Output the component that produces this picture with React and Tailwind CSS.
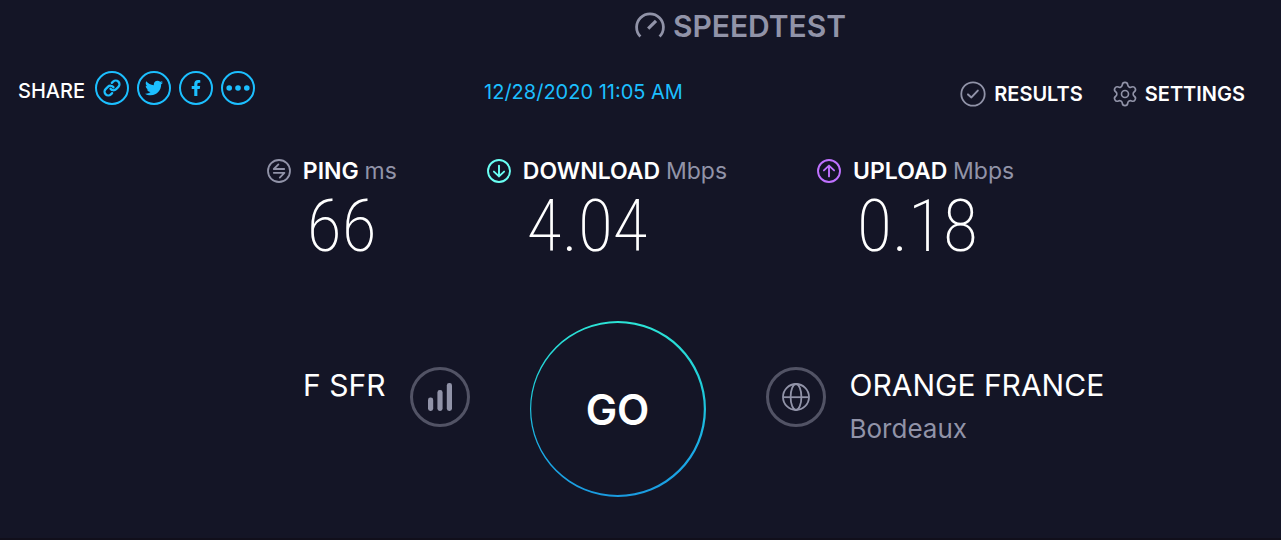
import { Settings } from "lucide-react"
import { FaFacebookF, FaTwitter } from "react-icons/fa"
import { FiLink } from "react-icons/fi"

function GaugeIcon() {
  return (
    <svg viewBox="0 0 30 30" className="size-[30px]" fill="none" stroke="currentColor" strokeWidth="2.8" aria-hidden="true">
      <path d="M5.4 25.6A13.4 13.4 0 1 1 24.6 25.6" />
      <path d="M13.2 17.6L21 9.8" strokeWidth="3.2" />
    </svg>
  )
}

function DotsIcon() {
  return (
    <svg viewBox="0 0 24 6" className="w-6" fill="currentColor" aria-hidden="true">
      <circle cx="3.2" cy="3" r="2.8" />
      <circle cx="12" cy="3" r="2.8" />
      <circle cx="20.8" cy="3" r="2.8" />
    </svg>
  )
}

function CheckIcon() {
  return (
    <svg viewBox="0 0 26 26" className="size-[26px] text-[#9193a8]" fill="none" stroke="currentColor" strokeWidth="1.8" aria-hidden="true">
      <circle cx="13" cy="13" r="11.7" />
      <path d="M8 13.4L11.4 16.4L17.8 9.6" strokeWidth="2" strokeLinecap="round" strokeLinejoin="round" />
    </svg>
  )
}

function PingIcon() {
  return (
    <svg viewBox="0 0 24 24" className="size-6 text-[#9193a8]" fill="none" stroke="currentColor" strokeWidth="1.8" strokeLinecap="round" strokeLinejoin="round" aria-hidden="true">
      <circle cx="12" cy="12" r="11" />
      <path d="M11.4 5.4L6.8 10H17.2" />
      <path d="M6.8 13.8H17.4L12.8 18.6" />
    </svg>
  )
}

function DownloadIcon() {
  return (
    <svg viewBox="0 0 24 24" className="size-6 text-[#6afff3]" fill="none" stroke="currentColor" strokeWidth="1.9" strokeLinecap="round" strokeLinejoin="round" aria-hidden="true">
      <circle cx="12" cy="12" r="11" />
      <path d="M12 6.6V17.4M6.9 12.6L12 17.4L17.1 12.6" />
    </svg>
  )
}

function UploadIcon() {
  return (
    <svg viewBox="0 0 24 24" className="size-6 text-[#bf71ff]" fill="none" stroke="currentColor" strokeWidth="1.9" strokeLinecap="round" strokeLinejoin="round" aria-hidden="true">
      <circle cx="12" cy="12" r="11" />
      <path d="M12 17.4V6.6M6.9 11.4L12 6.6L17.1 11.4" />
    </svg>
  )
}

function BarsIcon() {
  return (
    <svg viewBox="0 0 24 28" className="h-7 w-6" fill="#9193a8" aria-hidden="true">
      <rect x="0" y="14.5" width="5.2" height="13.5" rx="2.4" />
      <rect x="9.4" y="7" width="5.2" height="21" rx="2.4" />
      <rect x="18.8" y="0" width="5.2" height="28" rx="2.4" />
    </svg>
  )
}

function GlobeIcon() {
  return (
    <svg viewBox="0 0 28 28" className="size-7" fill="none" stroke="#9193a8" strokeWidth="1.8" aria-hidden="true">
      <circle cx="14" cy="14" r="13" />
      <ellipse cx="14" cy="14" rx="5.4" ry="13" />
      <path d="M1 14.2H27" />
    </svg>
  )
}

function GoRing() {
  return (
    <svg viewBox="0 0 176 176" className="absolute inset-0 size-full" aria-hidden="true">
      <defs>
        <linearGradient id="ring" x1="0" y1="0" x2="0" y2="1">
          <stop offset="0" stopColor="#2ce4d6" />
          <stop offset="0.4" stopColor="#1fcbd8" />
          <stop offset="0.75" stopColor="#1ba9e6" />
          <stop offset="1" stopColor="#1a9be0" />
        </linearGradient>
      </defs>
      <path
        fill="url(#ring)"
        fillRule="evenodd"
        d="M88 0A88 88 0 1 1 88 176A88 88 0 1 1 88 0ZM87.5 2A86.3 86 0 1 0 87.5 174A86.3 86 0 1 0 87.5 2Z"
      />
    </svg>
  )
}

const shareLinks = [
  { label: "Copy link", icon: <FiLink className="size-[18px]" strokeWidth={3} /> },
  { label: "Twitter", icon: <FaTwitter className="size-[18px]" /> },
  { label: "Facebook", icon: <FaFacebookF className="size-4" /> },
  { label: "More", icon: <DotsIcon /> },
]

const results = [
  { name: "PING", unit: "ms", value: "66", icon: <PingIcon /> },
  { name: "DOWNLOAD", unit: "Mbps", value: "4.04", icon: <DownloadIcon /> },
  { name: "UPLOAD", unit: "Mbps", value: "0.18", icon: <UploadIcon /> },
]

export default function App() {
  return (
    <div className="min-h-screen border-b-2 border-[#110f1b] bg-[#141526] font-['Inter',sans-serif] text-white">
      <header className="flex justify-center pt-2 pl-[200px] text-[#9193a8]">
        <a href="#" className="flex h-9 items-center gap-2 text-[30px] font-semibold">
          <GaugeIcon />
          <span>SPEEDTEST</span>
        </a>
      </header>

      <div className="mt-[27px] grid grid-cols-[1fr_auto_1fr] items-start pr-9 pl-[18px]">
        <div className="flex items-center gap-[10px]">
          <span className="pt-1.5 text-[20px] leading-6 font-medium">SHARE</span>
          <ul className="flex gap-2">
            {shareLinks.map((link) => (
              <li key={link.label}>
                <a
                  href="#"
                  aria-label={link.label}
                  className="flex size-[34px] items-center justify-center rounded-full border-2 border-[#1cbfff] text-[#1cbfff]"
                >
                  {link.icon}
                </a>
              </li>
            ))}
          </ul>
        </div>

        <a href="#" className="mr-24 pt-1.5 text-[20px] text-[#1cbfff]">12/28/2020 11:05 AM</a>

        <nav className="flex items-center justify-end gap-7 pt-2 text-[20px] font-semibold">
          <a href="#" className="flex items-center gap-2">
            <CheckIcon />
            RESULTS
          </a>
          <a href="#" className="flex items-center gap-1.5">
            <Settings className="size-7 text-[#9193a8]" strokeWidth={1.4} />
            SETTINGS
          </a>
        </nav>
      </div>

      <main>
        <dl className="mt-[46px] flex justify-center gap-[90px]">
          {results.map((result) => (
            <div key={result.name}>
              <dt className="flex h-8 items-center gap-3 text-[23px] font-semibold">
                {result.icon}
                <span>
                  {result.name} <span className="font-normal text-[#9193a8]">{result.unit}</span>
                </span>
              </dt>
              <dd className="pl-10 font-['Roboto_Condensed','Roboto',sans-serif] text-[72px] leading-[80px] font-extralight">{result.value}</dd>
            </div>
          ))}
        </dl>

        <section className="mt-[54px] grid grid-cols-[1fr_auto_1fr] gap-[60px] pr-[46px]">
          <div className="flex items-start justify-end gap-6 pt-[46px]">
            <p className="text-[30px] leading-9">F SFR</p>
            <span className="flex size-[60px] items-center justify-center rounded-full border-[3px] border-[#525365]">
              <BarsIcon />
            </span>
          </div>

          <button type="button" className="relative size-44 cursor-pointer rounded-full text-[42px] font-semibold">
            <GoRing />
            GO
          </button>

          <div className="flex items-start gap-6 pt-[46px]">
            <span className="flex size-[60px] shrink-0 items-center justify-center rounded-full border-[3px] border-[#525365]">
              <GlobeIcon />
            </span>
            <div>
              <p className="text-[30px] leading-9">ORANGE FRANCE</p>
              <p className="mt-2 text-[26px] leading-9 text-[#9193a8]">Bordeaux</p>
            </div>
          </div>
        </section>
      </main>
    </div>
  )
}
